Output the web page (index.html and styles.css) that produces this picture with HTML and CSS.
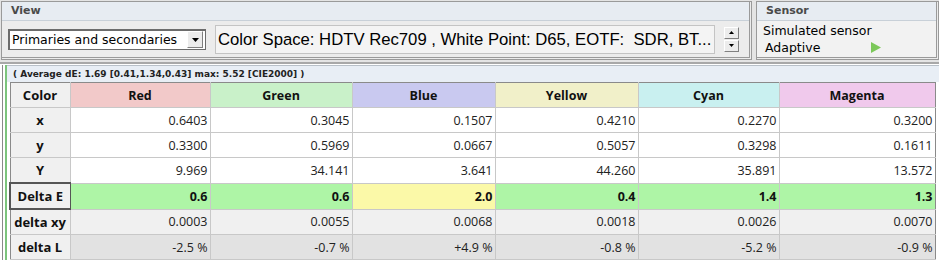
FILE: index.html
```html
<!DOCTYPE html>
<html>
<head>
    <title>Measurement Results</title>
    <link rel="stylesheet" href="styles.css">
</head>
<body>
    <div class="top">
        <div class="panel view-panel">
            <div class="panel-title">View</div>
            <div class="panel-body view-body">
                <div class="combo">
                    <span class="combo-text">Primaries and secondaries</span>
                    <span class="combo-btn"><svg width="7" height="4" viewBox="0 0 7 4"><path d="M0 0h7L3.5 4z" fill="#000"/></svg></span>
                </div>
                <div class="space-box">Color Space: HDTV Rec709 , White Point: D65, EOTF:&nbsp; SDR, BT...</div>
                <div class="spin">
                    <span class="spin-btn"><svg width="5" height="3" viewBox="0 0 5 3"><path d="M0 3h5L2.5 0z" fill="#000"/></svg></span>
                    <span class="spin-btn"><svg width="5" height="3" viewBox="0 0 5 3"><path d="M0 0h5L2.5 3z" fill="#000"/></svg></span>
                </div>
            </div>
        </div>
        <div class="panel sensor-panel">
            <div class="panel-title">Sensor</div>
            <div class="panel-body sensor-body">
                <div>Simulated sensor</div>
                <div class="adaptive">
                    <span>Adaptive</span>
                    <svg class="play" width="11" height="11" viewBox="0 0 11 11"><path d="M1 0L11 5.5 1 11z" fill="#7cc85a"/></svg>
                </div>
            </div>
        </div>
    </div>

    <div class="results">
        <div class="frame">
            <div class="summary">( Average dE: 1.69 [0.41,1.34,0.43] max: 5.52 [CIE2000] )</div>
            <table class="grid">
                <colgroup>
                    <col class="w-head">
                    <col class="w-red">
                    <col class="w-green">
                    <col class="w-blue">
                    <col class="w-yellow">
                    <col class="w-cyan">
                    <col class="w-magenta">
                </colgroup>
                <tr class="head">
                    <th class="rowhead">Color</th>
                    <th class="c-red">Red</th>
                    <th class="c-green">Green</th>
                    <th class="c-blue">Blue</th>
                    <th class="c-yellow">Yellow</th>
                    <th class="c-cyan">Cyan</th>
                    <th class="c-magenta">Magenta</th>
                </tr>
                <tr>
                    <th class="rowhead">x</th>
                    <td>0.6403</td><td>0.3045</td><td>0.1507</td><td>0.4210</td><td>0.2270</td><td class="last">0.3200</td>
                </tr>
                <tr>
                    <th class="rowhead">y</th>
                    <td>0.3300</td><td>0.5969</td><td>0.0667</td><td>0.5057</td><td>0.3298</td><td class="last">0.1611</td>
                </tr>
                <tr>
                    <th class="rowhead">Y</th>
                    <td>9.969</td><td>34.141</td><td>3.641</td><td>44.260</td><td>35.891</td><td class="last">13.572</td>
                </tr>
                <tr class="delta-e">
                    <th class="rowhead current">Delta E</th>
                    <td class="ok">0.6</td><td class="ok">0.6</td><td class="warn">2.0</td><td class="ok">0.4</td><td class="ok">1.4</td><td class="ok last">1.3</td>
                </tr>
                <tr class="delta-xy">
                    <th class="rowhead">delta xy</th>
                    <td>0.0003</td><td>0.0055</td><td>0.0068</td><td>0.0018</td><td>0.0026</td><td class="last">0.0070</td>
                </tr>
                <tr class="delta-l">
                    <th class="rowhead">delta L</th>
                    <td>-2.5 %</td><td>-0.7 %</td><td>+4.9 %</td><td>-0.8 %</td><td>-5.2 %</td><td class="last">-0.9 %</td>
                </tr>
            </table>
        </div>
    </div>
</body>
</html>
```

FILE: styles.css
```css
body {
    margin: 0;
    background-color: #ffffff;
    font-family: "DejaVu Sans", sans-serif;
    width: 939px;
    height: 267px;
    overflow: hidden;
}

.top {
    display: flex;
    gap: 4px;
    height: 64px;
    padding: 1px 0 2px 1px;
    box-sizing: border-box;
    background-color: #e4e4e4;
    border-bottom: 2px solid #a8a8a8;
}

.panel {
    display: flex;
    flex-direction: column;
    border: 1px solid #9a9a9a;
    border-bottom: 3px double #9a9a9a;
    border-right: 3px double #9a9a9a;
    background-color: #ececec;
    box-sizing: border-box;
}

.view-panel {
    width: 751px;
}

.sensor-panel {
    flex: 1;
}

.panel-title {
    height: 18px;
    line-height: 18px;
    padding-left: 9px;
    font-size: 11px;
    font-weight: bold;
    color: #4a4a4a;
    background-color: #e7ecf2;
    border-bottom: 1px solid #c8d0d8;
}

.panel-body {
    flex: 1;
}

.view-body {
    display: flex;
    align-items: center;
    padding-left: 6px;
}

.combo {
    display: flex;
    align-items: center;
    width: 198px;
    height: 21px;
    border: 1px solid #6c6c6c;
    border-top-width: 2px;
    border-left-width: 2px;
    background-color: #ffffff;
    box-sizing: border-box;
}

.combo-text {
    flex: 1;
    font-size: 12.5px;
    padding-left: 2px;
    color: #000;
}

.combo-btn {
    display: flex;
    align-items: center;
    justify-content: center;
    width: 14px;
    height: 15px;
    margin-right: 2px;
    background-color: #ececec;
    border: 1px solid #fff;
    border-right-color: #808080;
    border-bottom-color: #808080;
}

.space-box {
    margin-left: 9px;
    width: 500px;
    height: 29px;
    line-height: 27px;
    padding-left: 2px;
    box-sizing: border-box;
    font-family: "Liberation Sans", Arial, sans-serif;
    font-size: 16.7px;
    color: #000;
    background-color: #f4f4f4;
    border: 1px solid #c4c4c4;
    white-space: nowrap;
    overflow: hidden;
}

.spin {
    display: flex;
    flex-direction: column;
    gap: 1px;
    margin-left: 9px;
}

.spin-btn {
    display: flex;
    align-items: center;
    justify-content: center;
    width: 13px;
    height: 10px;
    background-color: #ececec;
    border: 1px solid #fff;
    border-right-color: #808080;
    border-bottom-color: #808080;
}

.sensor-body {
    padding: 1px 0 0 6px;
    font-size: 12.5px;
    line-height: 17px;
    color: #000;
    background-color: #f2f2f2;
}

.adaptive {
    display: flex;
    align-items: center;
    padding-left: 2px;
}

.play {
    margin-left: 50px;
}

.results {
    margin: 1px 0 0 2px;
    border-left: 1px solid #8a8a8a;
}

.frame {
    border-left: 2px solid #7cc47c;
    margin-left: 2px;
}

.summary {
    height: 16px;
    line-height: 16px;
    padding-left: 6px;
    font-size: 9px;
    font-weight: bold;
    color: #222;
    background-color: #e8eef5;
    border-top: 1px solid #b8c0c8;
}

.grid {
    margin-left: 2px;
    border-collapse: collapse;
    font-family: "Open Sans", "Noto Sans", sans-serif;
    font-size: 12.5px;
    color: #222;
    table-layout: fixed;
    width: 925px;
}

.w-head { width: 60px; }
.w-red { width: 140px; }
.w-green { width: 142px; }
.w-blue { width: 143px; }
.w-yellow { width: 143px; }
.w-cyan { width: 141px; }
.w-magenta { width: 156px; }

.grid th,
.grid td {
    height: 24px;
    padding: 0 2px;
    border: 1px solid #c8c8c8;
    white-space: nowrap;
    overflow: hidden;
}

.grid td {
    text-align: right;
    background-color: #ffffff;
}

.grid .head th {
    font-weight: bold;
    color: #111;
    border-top: 1px solid #8a8a8a;
}

.grid .rowhead {
    font-size: 13px;
    font-weight: bold;
    color: #111;
    background-color: #f0f0f0;
    border-left: 1px solid #8a8a8a;
}

.grid .head .rowhead {
    font-size: 13px;
}

.c-red { background-color: #f2c9c9; }
.c-green { background-color: #c9f1c9; }
.c-blue { background-color: #c9c9f0; }
.c-yellow { background-color: #f1f0c9; }
.c-cyan { background-color: #c9f0f0; }
.c-magenta { background-color: #f0c9ec; }

.grid .c-magenta,
.grid .last {
    border-right: 1px solid #8a8a8a;
}

.grid .delta-e td {
    font-weight: bold;
    color: #111;
}

.grid .delta-e .ok {
    background-color: #aef5a6;
}

.grid .delta-e .warn {
    background-color: #fbf9a8;
}

.grid .rowhead.current {
    border: 2px solid #555;
    border-right-width: 1px;
}

.grid .delta-xy td {
    background-color: #f0f0f0;
}

.grid .delta-l td {
    background-color: #e2e2e2;
}
```
